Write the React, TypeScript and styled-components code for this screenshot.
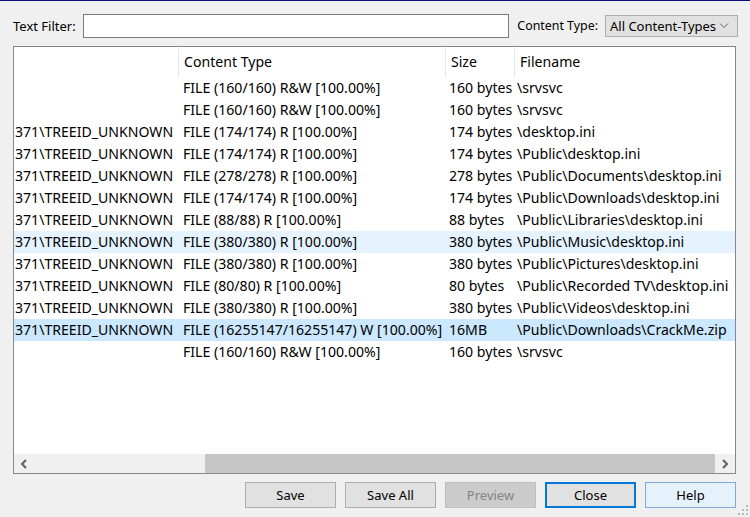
import React from "react";
import styled, { createGlobalStyle } from "styled-components";

const Global = createGlobalStyle`
  html, body { margin: 0; padding: 0; background: #f0f0f0; }
  body { font-family: "Noto Sans", "Open Sans", sans-serif; font-size: 13px; color: #000; }
  * { box-sizing: border-box; }
`;

const Window = styled.div`
  position: relative;
  width: 750px;
  height: 517px;
  background: #f0f0f0;
  border-top: 1px solid #0c0c78;
  padding: 13px 14px 0 13px;
  display: flex;
  flex-direction: column;
  overflow: hidden;
`;

const FilterBar = styled.div`
  display: flex;
  align-items: center;
  height: 24px;
`;

const Label = styled.span<{ $gap: number; $size: number }>`
  margin-right: ${(p) => p.$gap}px;
  white-space: nowrap;
  line-height: 20px;
  font-size: ${(p) => p.$size}px;
`;

const TextInput = styled.div`
  flex: 1;
  height: 24px;
  background: #fff;
  border: 1px solid #7a7a7a;
  margin-right: 8px;
`;

const Select = styled.div`
  width: 133px;
  height: 22px;
  margin-right: -2px;
  background: #e1e1e1;
  border: 1px solid #adadad;
  display: flex;
  align-items: center;
  justify-content: space-between;
  padding: 0 8px 0 4px;
  white-space: nowrap;
  font-size: 13px;
  overflow: hidden;
`;

const ListBox = styled.div`
  margin-top: 8px;
  width: 723px;
  min-width: 0;
  height: 428px;
  border: 1px solid #828790;
  background: #fff;
  display: flex;
  flex-direction: column;
  overflow: hidden;
  font-size: 14.1px;
`;

const COLS = "164px 267px 69px minmax(0, 1fr)";

const Header = styled.div`
  display: grid;
  grid-template-columns: ${COLS};
  height: 30px;
  flex: none;
`;

const HeadCell = styled.div<{ $divider?: boolean }>`
  border-left: ${(p) => (p.$divider ? "1px solid #e5e5e5" : "none")};
  padding-left: 5px;
  padding-bottom: 1px;
  display: flex;
  align-items: center;
  white-space: nowrap;
`;

const Rows = styled.div`
  flex: 1;
  min-height: 0;
  display: flex;
  flex-direction: column;
  overflow: hidden;
`;

const Row = styled.div<{ $state?: "hover" | "selected" }>`
  display: grid;
  grid-template-columns: ${COLS};
  width: 100%;
  height: 22px;
  flex: none;
  align-items: center;
  overflow: hidden;
  background: ${(p) =>
    p.$state === "selected" ? "#cce8ff" : p.$state === "hover" ? "#e5f3ff" : "transparent"};
`;

const Cell = styled.div<{ $pad: number }>`
  padding-left: ${(p) => p.$pad}px;
  min-width: 0;
  white-space: nowrap;
  overflow: visible;
  line-height: 22px;
`;

const HScroll = styled.div`
  height: 19px;
  flex: none;
  background: #f0f0f0;
  display: flex;
  align-items: stretch;
`;

const ArrowBtn = styled.div`
  width: 20px;
  display: flex;
  align-items: center;
  justify-content: center;
`;

const Track = styled.div`
  flex: 1;
  display: flex;
  align-items: stretch;
  padding: 0 0 0 171px;
`;

const Thumb = styled.div`
  flex: 1;
  background: #c6c6c6;
`;

const ButtonBar = styled.div`
  margin-top: 8px;
  display: flex;
  justify-content: flex-end;
  gap: 9px;
`;

type Variant = "normal" | "disabled" | "default" | "hot";

const Button = styled.div<{ $variant: Variant }>`
  width: 91px;
  height: 26px;
  display: flex;
  align-items: center;
  justify-content: center;
  font-size: 13px;
  background: ${(p) =>
    p.$variant === "disabled" ? "#cccccc" : p.$variant === "hot" ? "#e5f1fb" : "#e1e1e1"};
  border: ${(p) =>
    p.$variant === "default"
      ? "2px solid #0078d7"
      : p.$variant === "disabled"
      ? "1px solid #bfbfbf"
      : p.$variant === "hot"
      ? "1px solid #7fa9d6"
      : "1px solid #adadad"};
  color: ${(p) => (p.$variant === "disabled" ? "#838383" : "#000")};
`;

const Grip = styled.svg`
  position: absolute;
  right: 1px;
  bottom: 1px;
`;

type R = { a: string; b: string; c: string; d: string; s?: "hover" | "selected" };

const rows: R[] = [
  { a: "", b: "FILE (160/160) R&W [100.00%]", c: "160 bytes", d: "\\srvsvc" },
  { a: "", b: "FILE (160/160) R&W [100.00%]", c: "160 bytes", d: "\\srvsvc" },
  { a: "371\\TREEID_UNKNOWN", b: "FILE (174/174) R [100.00%]", c: "174 bytes", d: "\\desktop.ini" },
  { a: "371\\TREEID_UNKNOWN", b: "FILE (174/174) R [100.00%]", c: "174 bytes", d: "\\Public\\desktop.ini" },
  { a: "371\\TREEID_UNKNOWN", b: "FILE (278/278) R [100.00%]", c: "278 bytes", d: "\\Public\\Documents\\desktop.ini" },
  { a: "371\\TREEID_UNKNOWN", b: "FILE (174/174) R [100.00%]", c: "174 bytes", d: "\\Public\\Downloads\\desktop.ini" },
  { a: "371\\TREEID_UNKNOWN", b: "FILE (88/88) R [100.00%]", c: "88 bytes", d: "\\Public\\Libraries\\desktop.ini" },
  { a: "371\\TREEID_UNKNOWN", b: "FILE (380/380) R [100.00%]", c: "380 bytes", d: "\\Public\\Music\\desktop.ini", s: "hover" },
  { a: "371\\TREEID_UNKNOWN", b: "FILE (380/380) R [100.00%]", c: "380 bytes", d: "\\Public\\Pictures\\desktop.ini" },
  { a: "371\\TREEID_UNKNOWN", b: "FILE (80/80) R [100.00%]", c: "80 bytes", d: "\\Public\\Recorded TV\\desktop.ini" },
  { a: "371\\TREEID_UNKNOWN", b: "FILE (380/380) R [100.00%]", c: "380 bytes", d: "\\Public\\Videos\\desktop.ini" },
  { a: "371\\TREEID_UNKNOWN", b: "FILE (16255147/16255147) W [100.00%]", c: "16MB", d: "\\Public\\Downloads\\CrackMe.zip", s: "selected" },
  { a: "", b: "FILE (160/160) R&W [100.00%]", c: "160 bytes", d: "\\srvsvc" },
];

const Chevron = ({ dir }: { dir: "left" | "right" | "down" }) => {
  if (dir === "down")
    return (
      <svg width="10" height="6" viewBox="0 0 10 6">
        <path d="M1 0.5 L5 4.5 L9 0.5" fill="none" stroke="#606060" strokeWidth="1" />
      </svg>
    );
  return (
    <svg width="8" height="10" viewBox="0 0 8 10">
      <path
        d={dir === "left" ? "M6 1 L2 5 L6 9" : "M2 1 L6 5 L2 9"}
        fill="none"
        stroke="#606060"
        strokeWidth="2"
      />
    </svg>
  );
};

export default function App() {
  return (
    <>
      <Global />
      <Window>
        <FilterBar>
          <Label $gap={7} $size={13}>Text Filter:</Label>
          <TextInput />
          <Label $gap={7} $size={12.4}>Content Type:</Label>
          <Select>
            <span>All Content-Types</span>
            <Chevron dir="down" />
          </Select>
        </FilterBar>
        <ListBox>
          <Header>
            <HeadCell />
            <HeadCell $divider>Content Type</HeadCell>
            <HeadCell $divider>Size</HeadCell>
            <HeadCell $divider>Filename</HeadCell>
          </Header>
          <Rows>
            {rows.map((r, i) => (
              <Row key={i} $state={r.s}>
                <Cell $pad={1}>{r.a}</Cell>
                <Cell $pad={5}>{r.b}</Cell>
                <Cell $pad={4}>{r.c}</Cell>
                <Cell $pad={3}>{r.d}</Cell>
              </Row>
            ))}
          </Rows>
          <HScroll>
            <ArrowBtn>
              <Chevron dir="left" />
            </ArrowBtn>
            <Track>
              <Thumb />
            </Track>
            <ArrowBtn>
              <Chevron dir="right" />
            </ArrowBtn>
          </HScroll>
        </ListBox>
        <ButtonBar>
          <Button $variant="normal">Save</Button>
          <Button $variant="normal">Save All</Button>
          <Button $variant="disabled">Preview</Button>
          <Button $variant="default">Close</Button>
          <Button $variant="hot">Help</Button>
        </ButtonBar>
        <Grip width="12" height="12" viewBox="0 0 12 12">
          {[
            [9, 1],
            [9, 5],
            [5, 5],
            [9, 9],
            [5, 9],
            [1, 9],
          ].map(([x, y], i) => (
            <rect key={i} x={x} y={y} width="2" height="2" fill="#bcbcbc" />
          ))}
        </Grip>
      </Window>
    </>
  );
}
